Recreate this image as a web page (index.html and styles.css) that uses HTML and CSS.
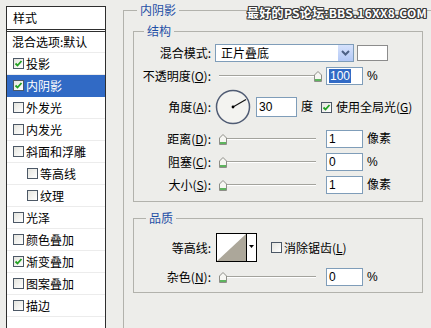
FILE: index.html
```html
<!DOCTYPE html>
<html lang="zh-CN">
  <head>
    <meta charset="UTF-8" />
    <meta name="viewport" content="width=device-width, initial-scale=1.0" />
    <title>图层样式 - 内阴影</title>
    <link rel="stylesheet" href="styles.css">
  </head>
  <body>
    <div class="dialog">
      <div class="styles-panel">
        <div class="styles-head">样式</div>
        <ul class="style-list">
          <li class="item first">混合选项:默认</li>
          <li class="item"><span class="cb on"><svg viewBox="0 0 9 9"><path d="M1.5 4.5 L3.5 6.5 L7.5 2" /></svg></span>投影</li>
          <li class="item selected"><span class="cb on"><svg viewBox="0 0 9 9"><path d="M1.5 4.5 L3.5 6.5 L7.5 2" /></svg></span>内阴影</li>
          <li class="item"><span class="cb"></span>外发光</li>
          <li class="item"><span class="cb"></span>内发光</li>
          <li class="item"><span class="cb"></span>斜面和浮雕</li>
          <li class="item sub"><span class="cb"></span>等高线</li>
          <li class="item sub"><span class="cb"></span>纹理</li>
          <li class="item"><span class="cb"></span>光泽</li>
          <li class="item"><span class="cb"></span>颜色叠加</li>
          <li class="item"><span class="cb on"><svg viewBox="0 0 9 9"><path d="M1.5 4.5 L3.5 6.5 L7.5 2" /></svg></span>渐变叠加</li>
          <li class="item"><span class="cb"></span>图案叠加</li>
          <li class="item"><span class="cb"></span>描边</li>
        </ul>
      </div>

      <div class="settings">
        <fieldset class="group outer">
          <legend>内阴影</legend>

          <fieldset class="group inner">
            <legend>结构</legend>

            <div class="row">
              <span class="label">混合模式:</span>
              <div class="select">
                <span class="select-text">正片叠底</span>
                <span class="select-btn"><svg viewBox="0 0 15 16"><path d="M4 6 L7.5 9.5 L11 6" /></svg></span>
              </div>
              <span class="swatch"></span>
            </div>

            <div class="row gap5">
              <span class="label">不透明度(<u>O</u>):</span>
              <div class="slider"><svg class="thumb" style="left: 95px" viewBox="0 0 8 11"><path class="thumb-body" d="M0.5 4 L4 0.5 L7.5 4 L7.5 10.5 L0.5 10.5 Z" /><path class="thumb-foot" d="M1 8 H7 V10 H1 Z" /></svg></div>
              <span class="field"><span class="sel">100</span></span>
              <span class="unit">%</span>
            </div>

            <div class="row angle">
              <span class="label">角度(<u>A</u>):</span>
              <svg class="dial" viewBox="0 0 36 36">
                <circle cx="18" cy="18" r="16.5" />
                <line x1="18" y1="18" x2="31" y2="10.5" />
                <circle class="hub" cx="18" cy="18" r="1.4" />
              </svg>
              <span class="field wide">30</span>
              <span class="unit">度</span>
              <span class="cb on global"><svg viewBox="0 0 9 9"><path d="M1.5 4.5 L3.5 6.5 L7.5 2" /></svg></span>
              <span class="cb-text">使用全局光(<u>G</u>)</span>
            </div>

            <div class="row gap5">
              <span class="label">距离(<u>D</u>):</span>
              <div class="slider"><svg class="thumb" style="left: 0px" viewBox="0 0 8 11"><path class="thumb-body" d="M0.5 4 L4 0.5 L7.5 4 L7.5 10.5 L0.5 10.5 Z" /><path class="thumb-foot" d="M1 8 H7 V10 H1 Z" /></svg></div>
              <span class="field">1</span>
              <span class="unit">像素</span>
            </div>

            <div class="row gap5">
              <span class="label">阻塞(<u>C</u>):</span>
              <div class="slider"><svg class="thumb" style="left: 0px" viewBox="0 0 8 11"><path class="thumb-body" d="M0.5 4 L4 0.5 L7.5 4 L7.5 10.5 L0.5 10.5 Z" /><path class="thumb-foot" d="M1 8 H7 V10 H1 Z" /></svg></div>
              <span class="field">0</span>
              <span class="unit">%</span>
            </div>

            <div class="row gap5">
              <span class="label">大小(<u>S</u>):</span>
              <div class="slider"><svg class="thumb" style="left: 0px" viewBox="0 0 8 11"><path class="thumb-body" d="M0.5 4 L4 0.5 L7.5 4 L7.5 10.5 L0.5 10.5 Z" /><path class="thumb-foot" d="M1 8 H7 V10 H1 Z" /></svg></div>
              <span class="field">1</span>
              <span class="unit">像素</span>
            </div>
          </fieldset>

          <fieldset class="group quality">
            <legend>品质</legend>

            <div class="row contour-row">
              <span class="label">等高线:</span>
              <div class="contour">
                <svg class="contour-preview" viewBox="0 0 29 27"><path d="M0 27 L29 0 L29 27 Z" /></svg>
                <span class="contour-btn"><svg viewBox="0 0 9 27"><path d="M2 11 H7 L4.5 14 Z" /></svg></span>
              </div>
              <span class="cb aa"></span>
              <span class="cb-text">消除锯齿(<u>L</u>)</span>
            </div>

            <div class="row gap6">
              <span class="label">杂色(<u>N</u>):</span>
              <div class="slider"><svg class="thumb" style="left: 0px" viewBox="0 0 8 11"><path class="thumb-body" d="M0.5 4 L4 0.5 L7.5 4 L7.5 10.5 L0.5 10.5 Z" /><path class="thumb-foot" d="M1 8 H7 V10 H1 Z" /></svg></div>
              <span class="field">0</span>
              <span class="unit">%</span>
            </div>
          </fieldset>
        </fieldset>
      </div>

      <div class="watermark">最好的PS论坛:BBS.16XX8.COM</div>
    </div>
  </body>
</html>
```

FILE: styles.css
```css
html,
body {
  margin: 0;
  padding: 0;
  height: 100%;
  overflow: hidden;
}
body {
  font-family: "Noto Sans CJK SC", sans-serif;
  font-size: 12px;
  line-height: 16px;
  color: #000;
  background-color: #ededea;
}
u {
  text-decoration: underline;
  text-underline-offset: 1px;
}
.dialog {
  position: relative;
  display: flex;
  width: 431px;
  height: 328px;
  overflow: hidden;
}

/* left list of styles */
.styles-panel {
  flex: none;
  width: 98px;
  height: 340px;
  margin: 6px 0 0 6px;
  border: 1px solid #2e2e2e;
  background-color: #fff;
}
.styles-head {
  height: 22px;
  line-height: 22px;
  padding-left: 6px;
  border-bottom: 3px double #2e2e2e;
}
.style-list {
  list-style: none;
  margin: 0;
  padding: 0;
}
.item {
  display: flex;
  align-items: center;
  height: 22px;
  box-sizing: border-box;
  padding-left: 6px;
  border-bottom: 1px solid #ececec;
  white-space: nowrap;
}
.item.first {
  height: 21px;
  padding-left: 5px;
}
.item.sub {
  padding-left: 20px;
}
.item.selected {
  background-color: #316ac5;
  color: #fff;
  border-bottom-color: #316ac5;
}
.cb {
  flex: none;
  display: inline-block;
  width: 11px;
  height: 11px;
  box-sizing: border-box;
  margin-right: 2px;
  border: 1px solid #4c5866;
  background: linear-gradient(135deg, #e4e4de, #ffffff);
}
.cb svg {
  display: block;
  width: 9px;
  height: 9px;
}
.cb path {
  fill: none;
  stroke: #21a121;
  stroke-width: 1.8;
}

/* right settings */
.settings {
  flex: none;
  width: 330px;
  margin-left: 17px;
}
.group {
  margin: 0;
  border: 1px solid #b2b2ac;
  min-inline-size: 0;
}
.group legend {
  padding: 0 3px;
  line-height: 16px;
  color: #1f4fa6;
}
.outer {
  height: 400px;
  margin-top: 2px;
  padding: 0 0 0 9px;
}
.outer > legend {
  margin-left: 4px;
}
.inner {
  width: 290px;
  box-sizing: border-box;
  margin-top: 5px;
  padding: 5px 0 7px 0;
}
.inner > legend {
  margin-left: 10px;
}
.quality {
  width: 290px;
  box-sizing: border-box;
  margin-top: 8px;
  padding: 7px 0 6px 0;
}
.quality > legend {
  margin-left: 12px;
}

.row {
  display: flex;
  align-items: center;
  height: 18px;
  white-space: nowrap;
}
.gap5 {
  margin-top: 5px;
}
.gap6 {
  margin-top: 6px;
}
.label {
  flex: none;
  width: 77px;
  text-align: right;
}

.select {
  display: flex;
  align-items: center;
  width: 139px;
  height: 18px;
  box-sizing: border-box;
  margin-left: 4px;
  border: 1px solid #7f9db9;
  background-color: #fff;
}
.select-text {
  flex: 1;
  padding-left: 5px;
}
.select-btn {
  width: 15px;
  height: 16px;
  background: linear-gradient(#d6e2fc, #b3c8f5);
}
.select-btn svg {
  display: block;
  width: 15px;
  height: 16px;
}
.select-btn path {
  fill: none;
  stroke: #4d6185;
  stroke-width: 2;
}
.swatch {
  width: 31px;
  height: 16px;
  box-sizing: border-box;
  margin-left: 3px;
  border: 1px solid #8c8c8c;
  background-color: #fff;
}

.slider {
  position: relative;
  flex: none;
  width: 102px;
  height: 18px;
  margin-left: 8px;
}
.slider::before {
  content: "";
  position: absolute;
  left: 0;
  top: 8px;
  width: 97px;
  border-top: 1px solid #a3a39d;
  border-bottom: 1px solid #fff;
}
.thumb {
  position: absolute;
  top: 4px;
  width: 8px;
  height: 11px;
}
.thumb-body {
  fill: #f6f6f2;
  stroke: #8e8e88;
  stroke-width: 1;
}
.thumb-foot {
  fill: #5eb45e;
}

.field {
  flex: none;
  width: 37px;
  height: 18px;
  box-sizing: border-box;
  margin-left: 5px;
  padding-left: 2px;
  border: 1px solid #7f9db9;
  background-color: #fff;
  font-family: "Liberation Sans", sans-serif;
  font-size: 12px;
  line-height: 16px;
}
.field.wide {
  width: 41px;
  height: 20px;
  line-height: 18px;
}
.sel {
  background-color: #316ac5;
  color: #fff;
  padding: 0 1px;
}
.unit {
  margin-left: 4px;
  font-family: "Liberation Sans", "Noto Sans CJK SC", sans-serif;
}

.angle {
  height: 36px;
  margin-top: 4px;
}
.dial {
  flex: none;
  width: 36px;
  height: 36px;
  margin-left: 4px;
}
.dial circle {
  fill: #f3f3f0;
  stroke: #505c74;
  stroke-width: 1.5;
}
.dial line {
  stroke: #111;
  stroke-width: 1.2;
}
.dial .hub {
  fill: #000;
  stroke: none;
}
.global {
  margin-left: 8px;
  margin-right: 4px;
}
.cb-text {
  white-space: nowrap;
}

.contour-row {
  height: 29px;
}
.contour {
  flex: none;
  display: flex;
  width: 41px;
  height: 29px;
  box-sizing: border-box;
  margin-left: 5px;
  border: 1px solid #000;
  background-color: #fff;
}
.contour-preview {
  display: block;
  width: 29px;
  height: 27px;
}
.contour-preview path {
  fill: #aca79a;
}
.contour-btn {
  width: 10px;
  height: 27px;
  border-left: 1px solid #000;
  box-sizing: border-box;
}
.contour-btn svg {
  display: block;
  width: 9px;
  height: 27px;
}
.contour-btn path {
  fill: #000;
}
.aa {
  margin-left: 14px;
}

.watermark {
  position: absolute;
  top: 5px;
  left: 247px;
  font-weight: bold;
  font-size: 12px;
  line-height: 16px;
  letter-spacing: 0.3px;
  color: #fff;
  white-space: nowrap;
  text-shadow: 1px 0 0 #3a3a3a, -1px 0 0 #3a3a3a, 0 1px 0 #3a3a3a, 0 -1px 0 #3a3a3a,
    1px 1px 0 #3a3a3a, -1px -1px 0 #3a3a3a, 1px -1px 0 #3a3a3a, -1px 1px 0 #3a3a3a;
}
```
